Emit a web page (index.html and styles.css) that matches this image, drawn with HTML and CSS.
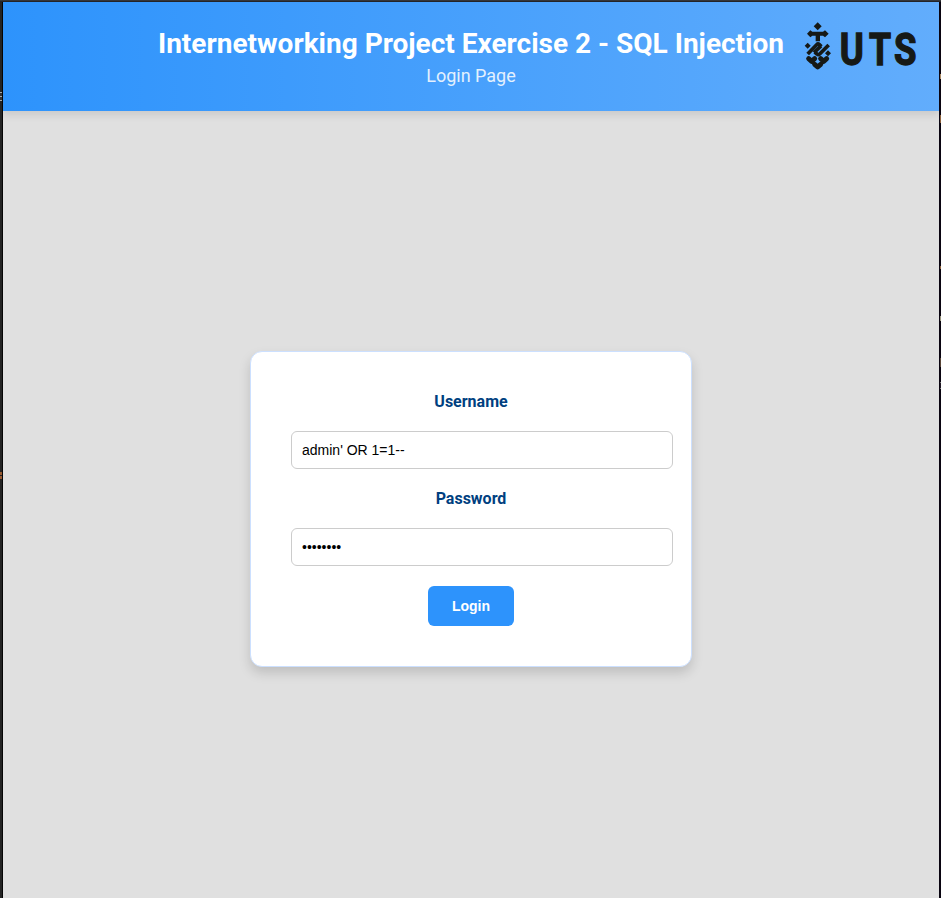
FILE: index.html
```html
<!DOCTYPE html>
<html lang="en">
<head>
<meta charset="utf-8">
<title>Login Page</title>
<link rel="stylesheet" href="styles.css">
</head>
<body>
<div class="page">
  <header class="header">
    <h1 class="title">Internetworking Project Exercise 2 - SQL Injection</h1>
    <p class="subtitle">Login Page</p>
    <svg class="logo" viewBox="0 0 339 150" role="img" aria-label="UTS">
      <g fill="#161916">
        <path d="M38 1 50 13 38 25 26 13Z"/>
        <path d="M6 35 16 25 22 29H54L60 25 71 35 60 46 54 41H45V58H32V41H22L16 46Z"/>
        <path d="M8 62 17 71 8 80 -1 71Z"/>
        <path d="M69 85 78 94 69 103 60 94Z"/>
      </g>
      <g class="weave">
        <path d="M8 96 35 68Q39 64 43 68L49 74"/>
        <path d="M71 69 44 96Q40 100 36 96L29 90"/>
        <path d="M27 92 48 72"/>
      </g>
      <g class="scales">
        <path d="M11 110 20 118 29 110M47 110 56 118 65 110M29 127 38 135 47 127"/>
      </g>
      <g class="wordmark">
        <text transform="translate(104 128) scale(.83 1)">U</text>
        <text transform="translate(192 128) scale(.81 1)">T</text>
        <text transform="translate(267 128) scale(.83 1)">S</text>
      </g>
    </svg>
  </header>
  <main class="content">
    <form class="card">
      <label class="label" for="username">Username</label>
      <input class="field" id="username" type="text" value="admin' OR 1=1--">
      <label class="label" for="password">Password</label>
      <input class="field" id="password" type="password" value="password">
      <button class="button" type="button">Login</button>
    </form>
  </main>
</div>
<div class="edge left"><i></i><i></i></div>
<div class="edge right"><i></i><i></i><i></i><i></i><i></i><i></i></div>
</body>
</html>
```
FILE: styles.css
```css
* { box-sizing: border-box; }
body {
  margin: 0;
  height: 898px;
  overflow: hidden;
  padding: 2px 2px 0 3px;
  background: linear-gradient(#35373b 0 1px, #242529 1px);
  font-family: Roboto, sans-serif;
}
.page {
  height: 896px;
  display: flex;
  flex-direction: column;
  background: #e0e0e0;
}
.header {
  position: relative;
  height: 109px;
  padding-top: 21px;
  text-align: center;
  color: #fff;
  background: linear-gradient(90deg, #2d93fc, #62adfc);
  box-shadow: 0 4px 8px rgba(0, 0, 0, .1);
}
.title { margin: 0 0 4px; font-size: 28px; line-height: 42px; font-weight: 700; }
.subtitle { margin: 0; font-size: 18px; line-height: 14px; opacity: .85; }
.logo { position: absolute; left: 802px; top: 20px; width: 113px; height: 50px; overflow: visible; }
.weave { fill: none; stroke: #161916; stroke-width: 11px; }
.scales { fill: none; stroke: #161916; stroke-width: 15px; stroke-linecap: round; stroke-linejoin: round; }
.wordmark { font: 700 132px Roboto, sans-serif; fill: #161916; stroke: #161916; stroke-width: 4px; }
.content { flex: 1; display: flex; align-items: center; justify-content: center; padding-top: 9px; }
.card {
  width: 442px;
  height: 316px;
  padding: 40px;
  display: flex;
  flex-direction: column;
  align-items: flex-start;
  border: 1px solid #cce0ff;
  border-radius: 12px;
  background: #fff;
  box-shadow: 0 6px 12px rgba(0, 0, 0, .15);
}
.label {
  width: 100%;
  height: 19px;
  margin-bottom: 20px;
  text-align: center;
  font-size: 16px;
  line-height: 19px;
  font-weight: 700;
  color: #003f80;
}
.field {
  width: 382px;
  height: 38px;
  margin: 0 0 20px;
  padding: 10px;
  border: 1px solid #ccc;
  border-radius: 6px;
  background: #fff;
  color: #000;
  font: 14px "Liberation Sans", Arial, sans-serif;
}
.button {
  align-self: center;
  width: 86px;
  height: 40px;
  padding: 0;
  border: 0;
  border-radius: 6px;
  background: #2d93fc;
  color: #fff;
  font: 700 14px "Liberation Sans", Arial, sans-serif;
}
.edge { position: absolute; top: 2px; bottom: 0; background: #0a0511; }
.left { left: 0; width: 3px; background: linear-gradient(90deg, #242424 2px, #050505 2px); }
.right { right: 0; width: 2px; }
.edge i { position: absolute; left: 0; width: 2px; height: 3px; background: #8b603c; }
.left i:nth-child(1) { top: 90px; height: 9px; background: repeating-linear-gradient(#aaa 0 1px, #333 1px 4px); }
.left i:nth-child(2) { top: 470px; height: 7px; background: linear-gradient(#9a5b32 3px, #242424 3px 4px, #9a5b32 4px); }
.right i { left: 1px; width: 1px; }
.right i:nth-child(1) { top: 72px; height: 5px; background: #aa8a65; }
.right i:nth-child(2) { top: 113px; height: 8px; }
.right i:nth-child(3) { top: 264px; }
.right i:nth-child(4) { top: 314px; height: 5px; background: #98947d; }
.right i:nth-child(5) { top: 356px; height: 9px; background: #594638; }
.right i:nth-child(6) { top: 380px; height: 7px; background: repeating-linear-gradient(#777 0 1px, #211925 1px 6px); }
```
